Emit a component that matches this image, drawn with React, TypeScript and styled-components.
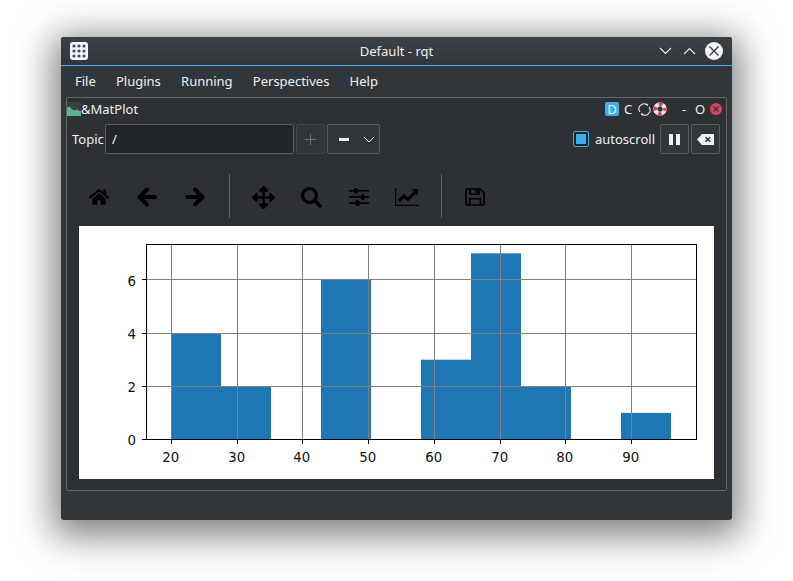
import React from "react";
import styled, { createGlobalStyle } from "styled-components";
import { FaHome, FaArrowsAlt, FaSearch } from "react-icons/fa";

const Global = createGlobalStyle`
  html, body { margin: 0; padding: 0; background: #fff; }
  #root { width: 793px; height: 581px; overflow: hidden; }
`;

const Desktop = styled.div`
  width: 793px;
  height: 581px;
  box-sizing: border-box;
  padding: 37px 61px 61px;
  background: #fff;
  font-family: "Noto Sans", sans-serif;
  font-size: 13px;
  color: #eff0f1;
`;

const Window = styled.div`
  width: 671px;
  height: 483px;
  display: flex;
  flex-direction: column;
  background: #31363b;
  border-radius: 3px;
  box-shadow: 0 8px 36px 8px rgba(0, 0, 0, 0.5);
`;

const TitleBar = styled.div`
  height: 28px;
  display: grid;
  grid-template-columns: 1fr auto 1fr;
  align-items: center;
  padding: 0 9px;
  background: linear-gradient(#3c4147, #31363b);
  border-radius: 3px 3px 0 0;
  border-bottom: 1px solid #3daee9;
`;

const AppIcon = styled.svg`
  width: 18px;
  height: 18px;
  display: block;
`;

const TitleText = styled.div`
  text-align: center;
  color: #eff0f1;
`;

const WinButtons = styled.div`
  display: flex;
  align-items: center;
  justify-content: flex-end;
  gap: 11px;
`;

const WinSvg = styled.svg`
  display: block;
  flex: none;
`;

const MenuBar = styled.div`
  height: 31px;
  box-sizing: border-box;
  padding: 0 14px 2px;
  display: flex;
  align-items: center;
  gap: 20.2px;
  color: #eff0f1;
`;

const Panel = styled.div`
  margin: 0 5px;
  height: 394px;
  box-sizing: border-box;
  border: 1px solid #626568;
  border-radius: 2px;
  background: #2d3035;
  display: flex;
  flex-direction: column;
`;

const DockTitle = styled.div`
  height: 25px;
  box-sizing: border-box;
  display: flex;
  align-items: center;
  padding: 0 4px 3px 0;
  color: #eff0f1;
`;

const DockName = styled.span`
  flex: 1;
`;

const DockBadge = styled.span`
  width: 14px;
  height: 14px;
  border-radius: 2px;
  background: #3daee9;
  color: #eff0f1;
  display: flex;
  align-items: center;
  justify-content: center;
  font-size: 13px;
`;

const DockLetter = styled.span<{ $w: number; $ml?: number }>`
  width: ${(p) => p.$w}px;
  margin-left: ${(p) => p.$ml ?? 0}px;
  text-align: center;
  flex: none;
`;

const TopicRow = styled.div`
  height: 30px;
  margin-top: 1px;
  display: flex;
  align-items: center;
  padding: 0 6px 0 5px;
`;

const TopicLabel = styled.span`
  width: 33px;
  flex: none;
`;

const TopicInput = styled.div`
  width: 189px;
  height: 30px;
  box-sizing: border-box;
  border: 1px solid #5a5d61;
  border-radius: 2px;
  background: #232629;
  padding-left: 6px;
  line-height: 28px;
  flex: none;
`;

const SquareButton = styled.div<{ $off?: boolean }>`
  width: 29px;
  height: 30px;
  box-sizing: border-box;
  margin-left: 2px;
  flex: none;
  border: 1px solid ${(p) => (p.$off ? "#43474c" : "#5a5d61")};
  border-radius: 2px;
  background: #31363b;
  display: flex;
  align-items: center;
  justify-content: center;
`;

const Combo = styled.div`
  width: 53px;
  height: 30px;
  box-sizing: border-box;
  margin-left: 2px;
  flex: none;
  border: 1px solid #5a5d61;
  border-radius: 2px;
  background: #31363b;
  display: flex;
  align-items: center;
  justify-content: space-between;
  padding: 0 4px 0 11px;
`;

const Spacer = styled.div`
  flex: 1;
`;

const CheckBox = styled.div`
  width: 16px;
  height: 16px;
  box-sizing: border-box;
  border: 1px solid #3daee9;
  border-radius: 2px;
  background: #232629;
  display: flex;
  align-items: center;
  justify-content: center;
  &::after {
    content: "";
    width: 10px;
    height: 10px;
    background: #3daee9;
  }
`;

const CheckLabel = styled.span`
  margin-left: 6px;
  margin-right: 3px;
`;

const MplToolbar = styled.div`
  height: 72px;
  box-sizing: border-box;
  padding: 14px 0 0 8px;
  display: flex;
  align-items: center;
  color: #000;
`;

const ToolSlot = styled.div`
  width: 48px;
  height: 48px;
  display: flex;
  align-items: center;
  justify-content: center;
  flex: none;
`;

const ToolSep = styled.div`
  width: 1px;
  height: 44px;
  margin: -2px 9px 0 10px;
  background: #5f6266;
  flex: none;
`;

const PlotArea = styled.div`
  margin: 0 12px;
  width: 635px;
  height: 253px;
  background: #fff;
  flex: none;
`;

const Plot = styled.svg`
  display: block;
`;

const TickText = styled.text`
  font-family: "DejaVu Sans", sans-serif;
  font-size: 13.3px;
  fill: #111;
`;

const bars = [
  [171.5, 49.5, 4],
  [221, 50, 2],
  [321, 50, 6],
  [421, 50, 3],
  [471, 50, 7],
  [521, 50, 2],
  [621, 50, 1],
];
const xTicks: [number, string][] = [
  [171.5, "20"], [237.5, "30"], [302.5, "40"], [368.5, "50"], [434.5, "60"], [500.5, "70"], [565.5, "80"], [631.5, "90"],
];
const yTicks: [number, number, string][] = [
  [439.5, 445, "0"],
  [386.5, 392, "2"],
  [333.5, 339, "4"],
  [279.5, 286, "6"],
];
const menus = ["File", "Plugins", "Running", "Perspectives", "Help"];

function Chart() {
  return (
    <Plot width={635} height={253} viewBox="79 226 635 253">
      {bars.map(([x, w, n]) => (
        <rect key={x} x={x} y={439.5 - n * 26.6} width={w} height={n * 26.6} fill="#1f77b4" />
      ))}
      {xTicks.map(([x]) => (
        <line key={x} x1={x} x2={x} y1={244.5} y2={439.5} stroke="#808080" strokeWidth={1} />
      ))}
      {yTicks.slice(1).map(([y]) => (
        <line key={y} x1={146} x2={696} y1={y} y2={y} stroke="#808080" strokeWidth={1} />
      ))}
      <rect x={146.5} y={244.5} width={550} height={195} fill="none" stroke="#000" strokeWidth={1} />
      {xTicks.map(([x, t]) => (
        <g key={t}>
          <line x1={x} x2={x} y1={439.5} y2={444} stroke="#000" strokeWidth={1} />
          <TickText x={x - 0.8} y={462} textAnchor="middle">{t}</TickText>
        </g>
      ))}
      {yTicks.map(([y, ty, t]) => (
        <g key={t}>
          <line x1={142} x2={146.5} y1={y} y2={y} stroke="#000" strokeWidth={1} />
          <TickText x={136} y={ty} textAnchor="end">{t}</TickText>
        </g>
      ))}
    </Plot>
  );
}

function GridIcon() {
  const dots: React.ReactNode[] = [];
  [4, 9, 14].forEach((cy) =>
    [4, 9, 14].forEach((cx) => dots.push(<circle key={`${cx}-${cy}`} cx={cx} cy={cy} r={1.6} fill="#3b4a7a" />))
  );
  return (
    <AppIcon viewBox="0 0 18 18">
      <rect width={18} height={18} rx={3} fill="#f4f5f7" />
      {dots}
    </AppIcon>
  );
}

function ArrowIcon({ flip }: { flip?: boolean }) {
  return (
    <WinSvg width={20} height={20} viewBox="0 0 20 20" style={flip ? { transform: "scaleX(-1)" } : undefined}>
      <path d="M10 2.5L2.5 10l7.5 7.5M3.5 10H18" fill="none" stroke="#000" strokeWidth={4} strokeLinecap="round" strokeLinejoin="round" />
    </WinSvg>
  );
}

function SlidersIcon() {
  return (
    <WinSvg width={22} height={20} viewBox="0 0 22 20">
      <g fill="#000">
        <rect x={1} y={3} width={20} height={1.6} />
        <rect x={1} y={9.2} width={20} height={1.6} />
        <rect x={1} y={15.4} width={20} height={1.6} />
        <rect x={6} y={1} width={3.5} height={5.6} rx={1} />
        <rect x={13} y={7.2} width={3.5} height={5.6} rx={1} />
        <rect x={7.5} y={13.4} width={4} height={5.6} rx={1} />
      </g>
    </WinSvg>
  );
}

function ChartIcon() {
  return (
    <WinSvg width={24} height={18} viewBox="0 0 24 18">
      <path d="M0.6 0V17.3H24" fill="none" stroke="#000" strokeWidth={1.3} />
      <path d="M4 13L9 8l4 3.5 7-7" fill="none" stroke="#000" strokeWidth={3} />
      <path d="M16.5 1H23v6.5z" fill="#000" />
    </WinSvg>
  );
}

function SaveIcon() {
  return (
    <WinSvg width={20} height={18} viewBox="0 0 20 18">
      <path d="M1 2.2a1.2 1.2 0 0 1 1.2-1.2H15l4 3.6v11.2a1.2 1.2 0 0 1-1.2 1.2H2.2A1.2 1.2 0 0 1 1 15.8z" fill="none" stroke="#000" strokeWidth={1.6} />
      <path d="M5 1.2v5h9v-5M4.6 17v-6.2h10.8V17" fill="none" stroke="#000" strokeWidth={1.5} />
      <rect x={10.6} y={2} width={2} height={3} fill="#000" />
    </WinSvg>
  );
}

function DockChartIcon() {
  return (
    <WinSvg width={14} height={14} viewBox="0 0 14 14">
      <rect width={14} height={14} fill="#3a3f45" />
      <path d="M0 14V5.5l3-1 2 3 3 1 2-1 2.5 1.5H14V14z" fill="#5fb38a" />
    </WinSvg>
  );
}

function Lifebuoy() {
  return (
    <WinSvg width={14} height={14} viewBox="0 0 16 16" style={{ marginLeft: 2 }}>
      <circle cx={8} cy={8} r={5.4} fill="none" stroke="#e8e8e8" strokeWidth={4.8} />
      <circle cx={8} cy={8} r={5.4} fill="none" stroke="#da4453" strokeWidth={4.8} strokeDasharray="4.2 4.28" strokeDashoffset={2.1} />
    </WinSvg>
  );
}

function Refresh() {
  return (
    <WinSvg width={13} height={13} viewBox="0 0 14 14" style={{ marginLeft: 1 }}>
      <path d="M2.2 9.6A5.4 5.4 0 0 1 9.6 1.9M11.8 4.4A5.4 5.4 0 0 1 4.4 12.1" fill="none" stroke="#eff0f1" strokeWidth={1.1} />
      <path d="M9.2 0v3.6l2-1.4zM4.8 14v-3.6l-2 1.4z" fill="#eff0f1" />
    </WinSvg>
  );
}

export default function App() {
  return (
    <>
      <Global />
      <Desktop>
        <Window>
          <TitleBar>
            <GridIcon />
            <TitleText>Default - rqt</TitleText>
            <WinButtons>
              <WinSvg width={13} height={8} viewBox="0 0 13 8">
                <path d="M1 1l5.5 5.5L12 1" fill="none" stroke="#eff0f1" strokeWidth={1.1} />
              </WinSvg>
              <WinSvg width={13} height={8} viewBox="0 0 13 8">
                <path d="M1 7l5.5-5.5L12 7" fill="none" stroke="#eff0f1" strokeWidth={1.1} />
              </WinSvg>
              <WinSvg width={18} height={18} viewBox="0 0 18 18" style={{ marginLeft: -2 }}>
                <circle cx={9} cy={9} r={9} fill="#f2f3f4" />
                <path d="M4.5 4.5l9 9M13.5 4.5l-9 9" stroke="#31363b" strokeWidth={1.2} />
              </WinSvg>
            </WinButtons>
          </TitleBar>
          <MenuBar>
            {menus.map((m) => (
              <span key={m}>{m}</span>
            ))}
          </MenuBar>
          <Panel>
            <DockTitle>
              <DockChartIcon />
              <DockName>&amp;MatPlot</DockName>
              <DockBadge>D</DockBadge>
              <DockLetter $w={18}>C</DockLetter>
              <Refresh />
              <Lifebuoy />
              <DockLetter $w={22} $ml={6}>-</DockLetter>
              <DockLetter $w={10}>O</DockLetter>
              <WinSvg width={12} height={12} viewBox="0 0 12 12" style={{ marginLeft: 5 }}>
                <circle cx={6} cy={6} r={6} fill="#da4453" />
                <path d="M3.5 3.5l5 5M8.5 3.5l-5 5" stroke="#31363b" strokeWidth={1.1} />
              </WinSvg>
            </DockTitle>
            <TopicRow>
              <TopicLabel>Topic</TopicLabel>
              <TopicInput>/</TopicInput>
              <SquareButton $off>
                <WinSvg width={13} height={13} viewBox="0 0 13 13">
                  <path d="M6.5 1v11M1 6.5h11" stroke="#6e7276" strokeWidth={1} />
                </WinSvg>
              </SquareButton>
              <Combo>
                <WinSvg width={10} height={3} viewBox="0 0 10 3">
                  <rect width={10} height={3} fill="#eff0f1" />
                </WinSvg>
                <WinSvg width={12} height={7} viewBox="0 0 12 7">
                  <path d="M1 1l5 5 5-5" fill="none" stroke="#eff0f1" strokeWidth={1} />
                </WinSvg>
              </Combo>
              <Spacer />
              <CheckBox />
              <CheckLabel>autoscroll</CheckLabel>
              <SquareButton>
                <WinSvg width={11} height={11} viewBox="0 0 11 11">
                  <path d="M0 0h4v11H0zM7 0h4v11H7z" fill="#eff0f1" />
                </WinSvg>
              </SquareButton>
              <SquareButton>
                <WinSvg width={17} height={11} viewBox="0 0 17 11">
                  <path d="M5 0H17v11H5L0 5.5z" fill="#eff0f1" />
                  <path d="M8.5 3.2l4.6 4.6M13.1 3.2L8.5 7.8" stroke="#31363b" strokeWidth={1.6} />
                </WinSvg>
              </SquareButton>
            </TopicRow>
            <MplToolbar>
              <ToolSlot><FaHome size={20} /></ToolSlot>
              <ToolSlot><ArrowIcon /></ToolSlot>
              <ToolSlot><ArrowIcon flip /></ToolSlot>
              <ToolSep />
              <ToolSlot><FaArrowsAlt size={23} /></ToolSlot>
              <ToolSlot><FaSearch size={21} /></ToolSlot>
              <ToolSlot><SlidersIcon /></ToolSlot>
              <ToolSlot><ChartIcon /></ToolSlot>
              <ToolSep />
              <ToolSlot><SaveIcon /></ToolSlot>
            </MplToolbar>
            <PlotArea>
              <Chart />
            </PlotArea>
          </Panel>
        </Window>
      </Desktop>
    </>
  );
}
